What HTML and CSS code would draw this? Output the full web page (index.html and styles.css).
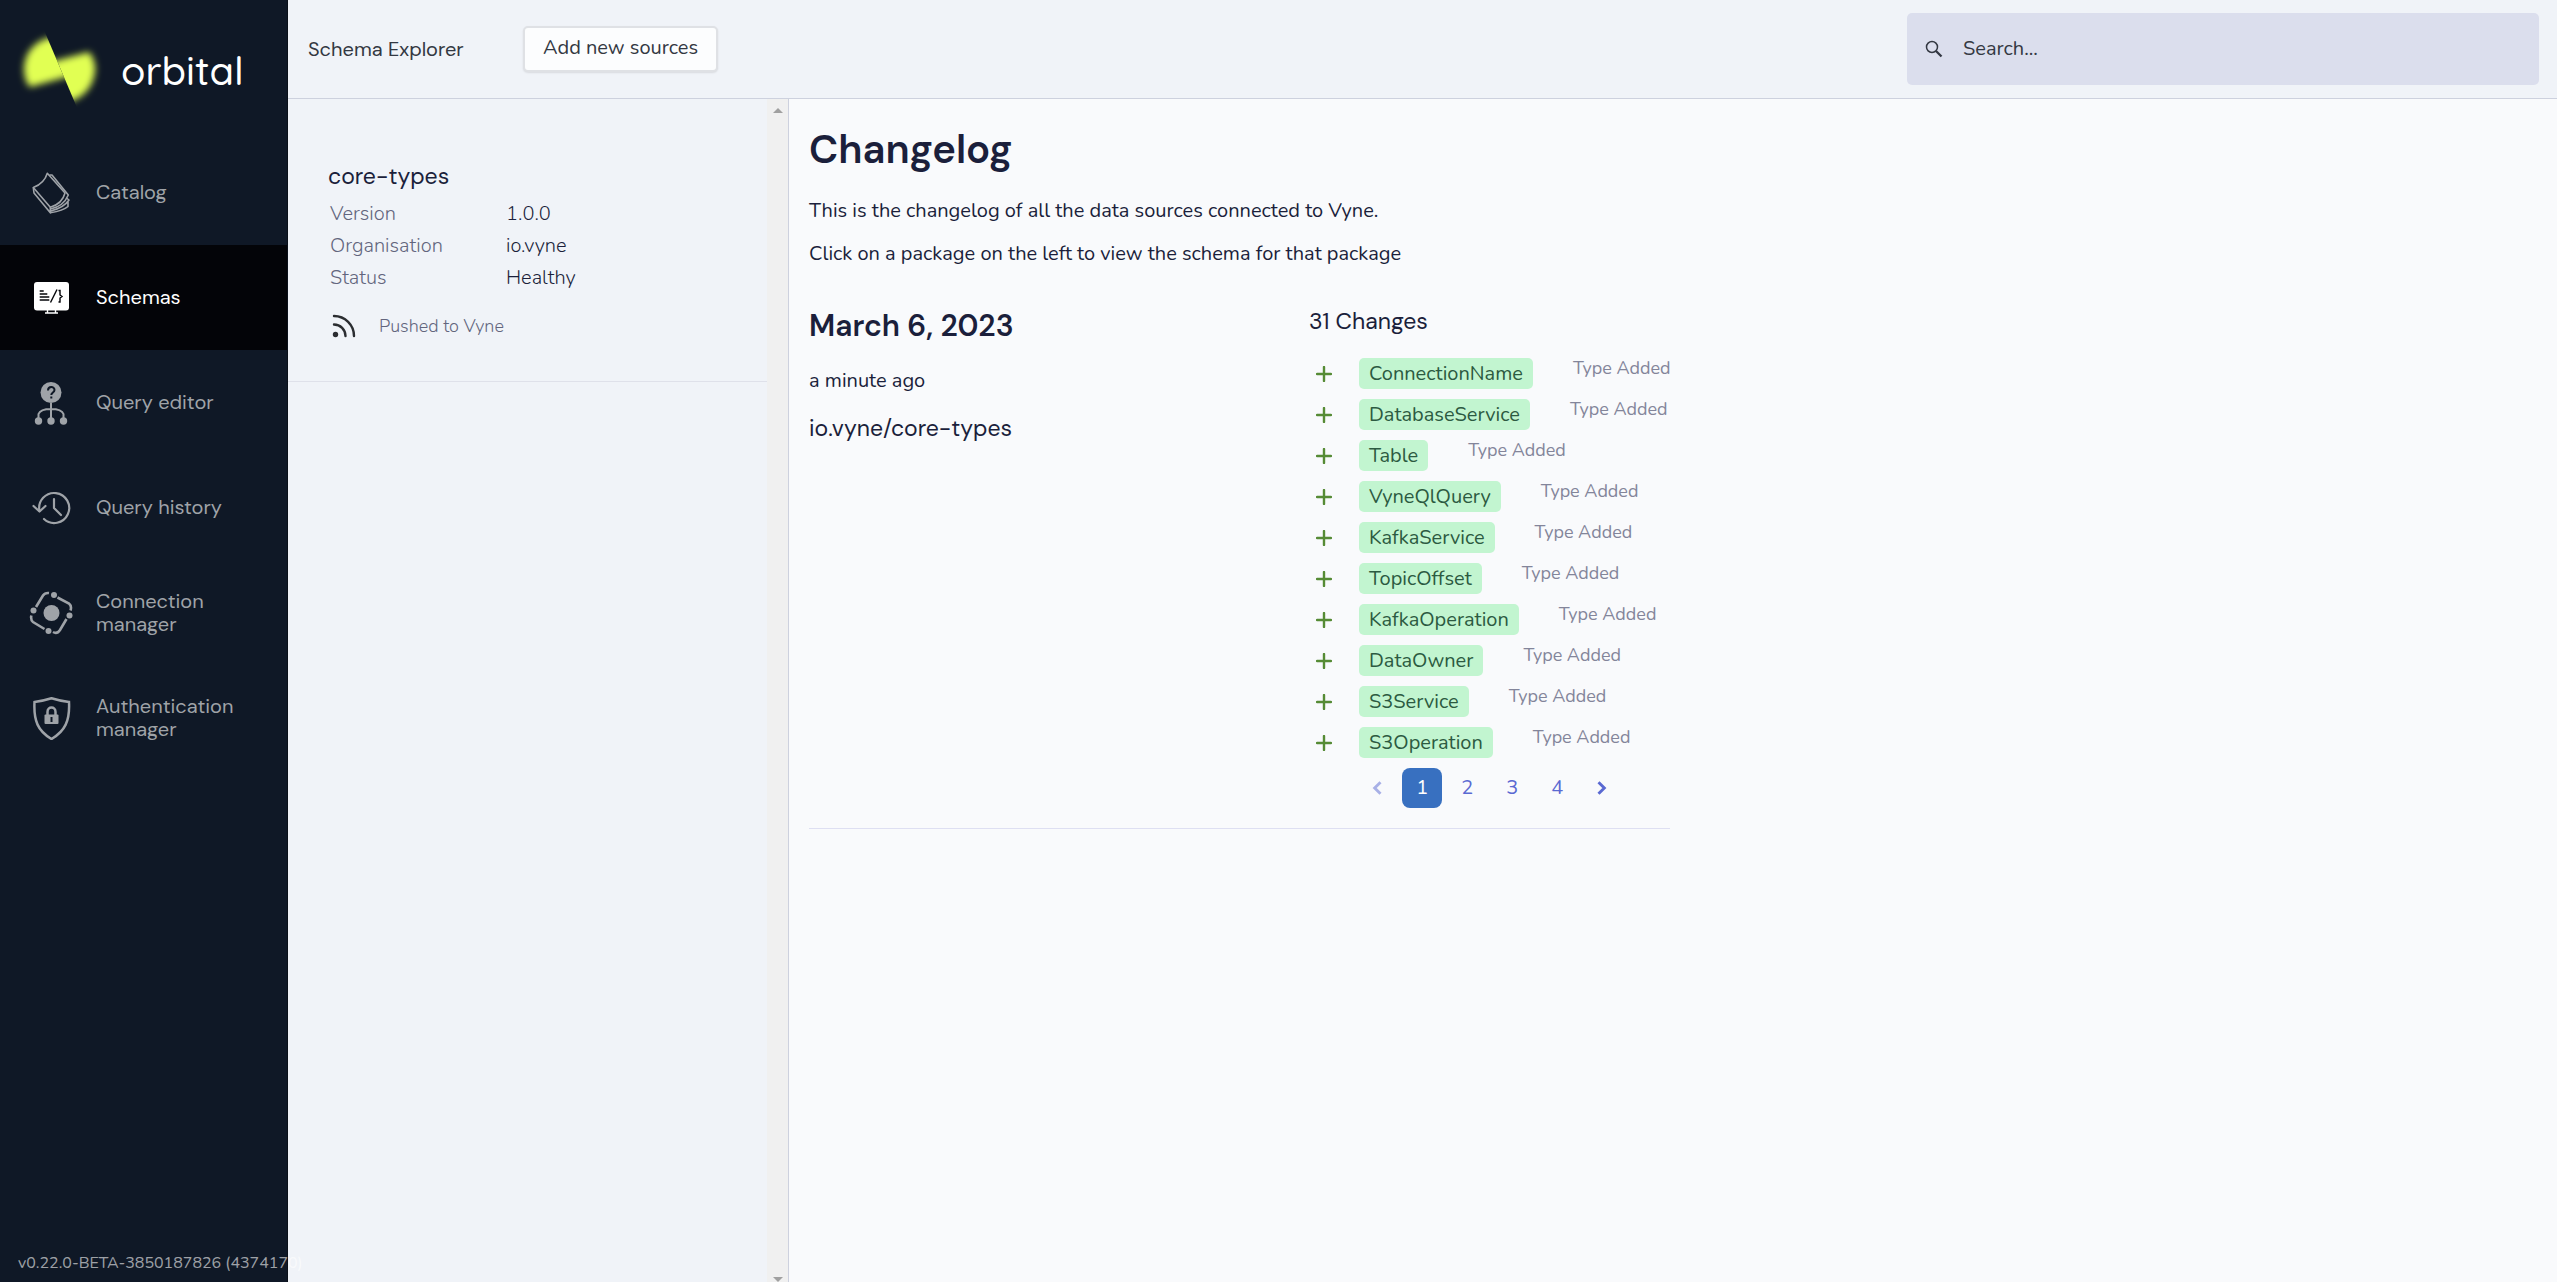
FILE: index.html
```html
<!DOCTYPE html>
<html lang="en">
<head>
<meta charset="utf-8">
<title>Orbital - Schema Explorer</title>
<meta name="viewport" content="width=device-width, initial-scale=1">
<link rel="stylesheet" href="styles.css">
</head>
<body>
<div class="app">
  <aside class="sidebar">
    <a class="brand" href="#">
      <svg class="brand-mark" viewBox="0 0 90 80" aria-hidden="true">
        <defs>
          <filter id="soft" x="-30%" y="-30%" width="160%" height="160%"><feGaussianBlur stdDeviation="3.500"/></filter>
          <clipPath id="left"><path d="M0 0H29L63 80H0Z"/></clipPath>
          <clipPath id="right"><path d="M29 0H90V80H63Z"/></clipPath>
        </defs>
        <g clip-path="url(#left)"><path filter="url(#soft)" fill="#e1ff52" d="M38 7C20 10 10 22 9 38C9 46 11 53 15 57L66 43Z"/></g>
        <g clip-path="url(#right)"><path filter="url(#soft)" fill="#e1ff52" d="M24 35L74 22C78 27 81 34 80 42C78 56 70 67 54 72Z"/></g>
      </svg>
      <span class="brand-name">orbital</span>
    </a>
    <nav class="menu" aria-label="Main">
      <a class="menu-item" href="#">
        <svg class="menu-icon" viewBox="0 0 44 44" fill="none" stroke="currentColor" stroke-width="1.6" stroke-linejoin="round" aria-hidden="true">
          <path d="M18.300 2.200L36 22C34 30 29 34 21.300 36.200L4.300 16.500C11 14 16 10 18.300 2.200Z"/><path d="M4.300 16.500L5 22L21.300 41.800V36.200"/><path d="M20.500 4L23 4L39.300 24C36 32 31 36 21.500 38"/><path d="M37.500 27L40 29C36 35 30 38 21.500 40M21.300 41.800C29 40.500 35 39 39 35.500V30"/>
        </svg>
        <span>Catalog</span>
      </a>
      <a class="menu-item active" href="#" aria-current="page">
        <svg class="menu-icon" viewBox="0 0 44 44" fill="none" aria-hidden="true">
          <rect x="5" y="6" width="35" height="28.500" rx="3" fill="currentColor"/>
          <path d="M18.500 34V37M26.500 34V37M16 37H29" stroke="currentColor" stroke-width="1.4"/>
          <path d="M10.700 15H14.700M10.700 18H18.300M10.700 21H20.300M10.700 24H20.300" stroke="#030408" stroke-width="1.400"/>
          <path d="M28 13.500L21.500 26.500M29.500 14.500H31V19L33 20.500L31 22V26H29.500" stroke="#030408" stroke-width="1.400"/>
        </svg>
        <span>Schemas</span>
      </a>
      <a class="menu-item" href="#">
        <svg class="menu-icon" viewBox="0 0 44 44" fill="none" stroke="currentColor" stroke-width="2" aria-hidden="true">
          <circle cx="22" cy="11.500" r="10.500" fill="currentColor" stroke="none"/>
          <path d="M19 9.500C19 5 25.500 5 25.500 9C25.500 11.500 22.300 11.500 22.300 14M22.300 15.500V17.500" stroke="#0f1826" stroke-width="2"/>
          <path d="M22 22V40M9.500 39V33C11 29 16 28 22 28S33 29 34.500 33V39"/>
          <g fill="currentColor" stroke="none"><circle cx="9.500" cy="40" r="3.700"/><circle cx="22" cy="40" r="3.700"/><circle cx="34.500" cy="40" r="3.700"/></g>
        </svg>
        <span>Query editor</span>
      </a>
      <a class="menu-item" href="#">
        <svg class="menu-icon" viewBox="0 0 44 44" fill="none" stroke="currentColor" stroke-width="2.200" stroke-linecap="round" stroke-linejoin="round" aria-hidden="true">
          <path d="M15 33A15 15 0 1 0 10.500 25"/><path d="M4.500 20L10.500 25.500L16.500 20M25 13V22L32 29"/>
        </svg>
        <span>Query history</span>
      </a>
      <a class="menu-item" href="#">
        <svg class="menu-icon" viewBox="0 0 44 44" fill="none" stroke="currentColor" stroke-width="2.600" aria-hidden="true">
          <path d="M7 16L14 4.500Q16 1.500 20 2M28.500 6.500L40 12.500Q43 15 41.500 19.500M37.500 28L31 39Q28 43.500 24 41M15.500 38L4 31Q1.500 29 2.300 24.500"/>
          <g fill="currentColor" stroke="none"><circle cx="22.500" cy="22" r="8"/><circle cx="25" cy="4" r="3"/><circle cx="40.500" cy="24.500" r="3"/><circle cx="19.500" cy="40" r="3"/><circle cx="4.500" cy="19.500" r="3"/></g>
        </svg>
        <span>Connection manager</span>
      </a>
      <a class="menu-item" href="#">
        <svg class="menu-icon" viewBox="0 0 44 44" fill="none" stroke="currentColor" stroke-width="2.500" aria-hidden="true">
          <path d="M22.500 2.300Q14 5 5.500 6C4.500 25 9 35 22.500 43C36 35 41 25 40 6Q31 5 22.500 2.300Z"/>
          <path d="M18.500 19V16C18.500 10 26.500 10 26.500 16V19"/><rect x="15.500" y="18.500" width="14" height="9.500" rx="1" fill="currentColor" stroke="none"/>
          <path d="M22.500 21V26" stroke="#0f1826" stroke-width="2"/>
        </svg>
        <span>Authentication manager</span>
      </a>
    </nav>
    <div class="version">v0.22.0-BETA-3850187826 (4374170)</div>
  </aside>

  <div class="page">
    <header class="topbar">
      <div class="page-title">Schema Explorer</div>
      <button class="add-button" type="button">Add new sources</button>
      <label class="search">
        <svg class="search-icon" viewBox="0 0 18 18" fill="none" stroke="currentColor" stroke-width="1.500" aria-hidden="true"><circle cx="7" cy="7" r="5.500"/><path d="M11 11L16.500 16.500" stroke-width="2.300"/></svg>
        <input class="search-input" type="text" placeholder="Search..." aria-label="Search">
      </label>
    </header>

    <div class="body">
      <section class="packages">
        <div class="package-list">
          <article class="package">
            <h2 class="package-name">core-types</h2>
            <dl class="facts">
              <dt>Version</dt><dd>1.0.0</dd>
              <dt>Organisation</dt><dd>io.vyne</dd>
              <dt>Status</dt><dd>Healthy</dd>
            </dl>
            <div class="source">
              <svg class="source-icon" viewBox="0 0 24 24" fill="none" stroke="currentColor" stroke-width="2.400" stroke-linecap="round" aria-hidden="true"><path d="M2 2A20 20 0 0 1 22 22M2 10.500A11.500 11.500 0 0 1 13.500 22"/><circle cx="3.500" cy="20.500" r="2.700" fill="currentColor" stroke="none"/></svg>
              <span>Pushed to Vyne</span>
            </div>
          </article>
        </div>
        <div class="scrollbar" aria-hidden="true"><span class="arrow-up"></span><span class="arrow-down"></span></div>
      </section>

      <main class="changelog">
        <h1 class="heading">Changelog</h1>
        <p class="intro">This is the changelog of all the data sources connected to Vyne.</p>
        <p class="intro">Click on a package on the left to view the schema for that package</p>

        <section class="entry">
          <div class="entry-info">
            <h2 class="entry-date">March 6, 2023</h2>
            <p class="entry-age">a minute ago</p>
            <h3 class="entry-package">io.vyne/core-types</h3>
          </div>
          <div class="entry-changes">
            <h3 class="change-count">31 Changes</h3>
            <ul class="changes">
              <li class="change"><svg class="plus" viewBox="0 0 16 16" aria-hidden="true"><path d="M8 1V15M1 8H15"/></svg><span class="tag">ConnectionName</span><span class="kind">Type Added</span></li>
              <li class="change"><svg class="plus" viewBox="0 0 16 16" aria-hidden="true"><path d="M8 1V15M1 8H15"/></svg><span class="tag">DatabaseService</span><span class="kind">Type Added</span></li>
              <li class="change"><svg class="plus" viewBox="0 0 16 16" aria-hidden="true"><path d="M8 1V15M1 8H15"/></svg><span class="tag">Table</span><span class="kind">Type Added</span></li>
              <li class="change"><svg class="plus" viewBox="0 0 16 16" aria-hidden="true"><path d="M8 1V15M1 8H15"/></svg><span class="tag">VyneQlQuery</span><span class="kind">Type Added</span></li>
              <li class="change"><svg class="plus" viewBox="0 0 16 16" aria-hidden="true"><path d="M8 1V15M1 8H15"/></svg><span class="tag">KafkaService</span><span class="kind">Type Added</span></li>
              <li class="change"><svg class="plus" viewBox="0 0 16 16" aria-hidden="true"><path d="M8 1V15M1 8H15"/></svg><span class="tag">TopicOffset</span><span class="kind">Type Added</span></li>
              <li class="change"><svg class="plus" viewBox="0 0 16 16" aria-hidden="true"><path d="M8 1V15M1 8H15"/></svg><span class="tag">KafkaOperation</span><span class="kind">Type Added</span></li>
              <li class="change"><svg class="plus" viewBox="0 0 16 16" aria-hidden="true"><path d="M8 1V15M1 8H15"/></svg><span class="tag">DataOwner</span><span class="kind">Type Added</span></li>
              <li class="change"><svg class="plus" viewBox="0 0 16 16" aria-hidden="true"><path d="M8 1V15M1 8H15"/></svg><span class="tag">S3Service</span><span class="kind">Type Added</span></li>
              <li class="change"><svg class="plus" viewBox="0 0 16 16" aria-hidden="true"><path d="M8 1V15M1 8H15"/></svg><span class="tag">S3Operation</span><span class="kind">Type Added</span></li>
            </ul>
            <nav class="pager" aria-label="Changes pages">
              <button class="pager-button" type="button" disabled aria-label="Previous page"><svg class="chevron" viewBox="0 0 12 12" aria-hidden="true"><path d="M9 1L4 6L9 11"/></svg></button>
              <button class="pager-button current" type="button" aria-current="page">1</button>
              <button class="pager-button" type="button">2</button>
              <button class="pager-button" type="button">3</button>
              <button class="pager-button" type="button">4</button>
              <button class="pager-button" type="button" aria-label="Next page"><svg class="chevron" viewBox="0 0 12 12" aria-hidden="true"><path d="M3 1L8 6L3 11"/></svg></button>
            </nav>
          </div>
        </section>
      </main>
    </div>
  </div>
</div>
</body>
</html>
```
FILE: styles.css
```css
:root {
  --heading-font: "DM Sans", Inter, "Liberation Sans", sans-serif;
  --body-font: Nunito, Lato, "Open Sans", sans-serif;
  --ink: #1b1f3b;
  --muted: #62657d;
  --line: #cdd1de;
  --panel: #f0f3f8;
}

* {
  box-sizing: border-box;
}

body {
  margin: 0;
  background: #f9fafc;
  color: var(--ink);
  font-family: var(--body-font);
  font-size: 20px;
  font-weight: 400;
  line-height: 32px;
}

h1, h2, h3, p, ul, dl, dd {
  margin: 0;
  padding: 0;
}

button, input {
  font: inherit;
}

.app {
  display: flex;
  min-height: 100vh;
}

/* Sidebar */
.sidebar {
  position: relative;
  z-index: 1;
  display: flex;
  flex: none;
  flex-direction: column;
  width: 288px;
  border-right: 1px solid #0a1019;
  background: #0f1826;
  color: #9fa3a8;
}

.brand {
  display: flex;
  align-items: center;
  gap: 16px;
  height: 140px;
  padding: 0 15px;
  color: #fff;
  text-decoration: none;
}

.brand-mark {
  width: 90px;
  height: 80px;
}

.brand-name {
  font-family: Quicksand, Lato, sans-serif;
  font-size: 40px;
  font-weight: 500;
  line-height: 48px;
}

.menu {
  flex: 1;
}

.menu-item {
  display: flex;
  align-items: center;
  gap: 23px;
  height: 105px;
  padding: 0 29px;
  color: inherit;
  font-family: var(--heading-font);
  font-size: 20px;
  line-height: 23px;
  text-decoration: none;
}

.menu-item.active {
  background: #030408;
  color: #fff;
}

.menu-icon {
  flex: none;
  width: 44px;
  height: 44px;
}

.version {
  padding: 0 0 9px 18px;
  color: rgba(255, 255, 255, 0.6);
  font-size: 16px;
  line-height: 20px;
  white-space: nowrap;
}

/* Top bar */
.page {
  display: flex;
  flex: 1;
  flex-direction: column;
  min-width: 0;
}

.topbar {
  display: flex;
  align-items: center;
  height: 99px;
  padding: 0 18px 0 20px;
  border-bottom: 1px solid var(--line);
  background: var(--panel);
  color: #333842;
}

.page-title {
  width: 215px;
  font-family: var(--heading-font);
}

.add-button {
  height: 46px;
  padding: 0 18px 2px;
  border: 2px solid #dfe1e5;
  border-radius: 5px;
  background: #fcfdfe;
  box-shadow: 0 1px 2px rgba(0, 0, 0, 0.1);
  color: inherit;
}

.search {
  display: flex;
  align-items: center;
  gap: 20px;
  width: 632px;
  height: 72px;
  margin-left: auto;
  padding: 0 18px;
  border-radius: 5px;
  background: #dbdeed;
}

.search-icon {
  flex: none;
  width: 18px;
  height: 18px;
}

.search-input {
  flex: 1;
  min-width: 0;
  padding: 0;
  border: 0;
  outline: 0;
  background: none;
}

.search-input::placeholder {
  color: #333842;
  opacity: 1;
}

/* Package list */
.body {
  display: flex;
  flex: 1;
}

.packages {
  display: flex;
  flex: none;
  width: 501px;
  border-right: 1px solid var(--line);
  background: var(--panel);
}

.package-list {
  flex: 1;
}

.package {
  padding: 59px 40px 32px;
  border-bottom: 1px solid #dfe1ea;
  font-weight: 300;
}

.package-name {
  padding-bottom: 4px;
  font-family: var(--heading-font);
  font-size: 23px;
  font-weight: 400;
  line-height: 36px;
}

.facts {
  display: grid;
  grid-template-columns: 176px 1fr;
  padding-left: 2px;
}

.facts dt {
  color: var(--muted);
}

.source {
  display: flex;
  align-items: center;
  gap: 23px;
  padding: 16px 0 7px 4px;
  color: var(--muted);
  font-size: 18px;
}

.source-icon {
  width: 24px;
  height: 24px;
  color: #2b2d31;
}

.scrollbar {
  display: flex;
  flex-direction: column;
  align-items: center;
  justify-content: space-between;
  width: 21px;
  padding: 9px 0 0;
  background: #f0f0f0;
}

.arrow-up, .arrow-down {
  border: 5px solid transparent;
  border-top: 0;
  border-bottom: 5px solid #a0a0a0;
}

.arrow-down {
  border-top: 5px solid #a0a0a0;
  border-bottom: 0;
}

/* Changelog */
.changelog {
  flex: 1;
  padding: 20px;
}

.heading {
  margin-bottom: 16px;
  font-family: var(--heading-font);
  font-size: 40px;
  font-weight: 600;
  line-height: 60px;
}

.intro {
  margin-bottom: 11px;
}

.entry {
  display: flex;
  gap: 20px;
  width: 861px;
  margin-top: 31px;
  padding-bottom: 20px;
  border-bottom: 1px solid #dedff2;
}

.entry-info {
  flex: none;
  width: 480px;
  padding-top: 5px;
}

.entry-date {
  margin-bottom: 19px;
  font-family: var(--heading-font);
  font-size: 30px;
  font-weight: 600;
  line-height: 40px;
}

.entry-package {
  margin-top: 11px;
  font-family: var(--heading-font);
  font-size: 23px;
  font-weight: 400;
  line-height: 40px;
}

.entry-changes {
  flex: 1;
}

.change-count {
  font-family: var(--heading-font);
  font-size: 23px;
  font-weight: 400;
  line-height: 40px;
}

.changes {
  display: grid;
  gap: 10px;
  padding: 17px 0 10px 7px;
  list-style: none;
}

.change {
  display: flex;
  align-items: center;
  height: 31px;
}

.plus {
  width: 16px;
  height: 16px;
  margin-right: 27px;
  fill: none;
  stroke: #568b35;
  stroke-width: 2.4;
  stroke-linecap: round;
}

.tag {
  height: 31px;
  margin-right: 40px;
  padding: 0 10px;
  border-radius: 5px;
  background: #c2f5d0;
  color: #2c5a41;
  line-height: 31px;
}

.kind {
  align-self: flex-start;
  color: #83859a;
  font-size: 18px;
  line-height: 20px;
  white-space: nowrap;
}

.pager {
  display: flex;
  justify-content: center;
  gap: 5px;
}

.pager-button {
  display: grid;
  place-items: center;
  width: 40px;
  height: 40px;
  padding: 0;
  border: 0;
  border-radius: 8px;
  background: none;
  color: #5a69d2;
}

.pager-button:disabled {
  opacity: 0.5;
}

.pager-button.current {
  background: #3870c0;
  color: #fff;
}

.chevron {
  width: 14px;
  height: 14px;
  fill: none;
  stroke: currentColor;
  stroke-width: 2.5;
}
```
